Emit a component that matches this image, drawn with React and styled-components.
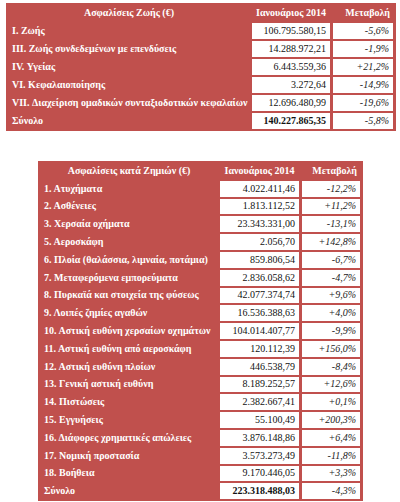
import styled, { createGlobalStyle } from "styled-components";

const GlobalStyle = createGlobalStyle`
  html, body {
    margin: 0;
    padding: 0;
    background: #ffffff;
  }
`;

const Page = styled.div`
  display: flex;
  flex-direction: column;
  align-items: flex-start;
  padding: 3px 0 0 6px;
  font-family: "Liberation Serif", "Times New Roman", serif;
`;

const Table = styled.table`
  table-layout: fixed;
  width: ${(p) => p.$width}px;
  margin: ${(p) => p.$margin || "0"};
  border-collapse: separate;
  border-spacing: 3px 2px;
  background: #c0504d;
  font-size: 10px;
  line-height: 1;
`;

const Row = styled.tr`
  height: ${(p) => p.$h}px;
`;

const HeadCell = styled.th`
  color: #ffffff;
  font-weight: bold;
  text-align: ${(p) => p.$align || "center"};
  padding: 0 3px;
  white-space: nowrap;
`;

const Label = styled.td`
  color: #ffffff;
  font-weight: bold;
  padding: 0 3px;
  white-space: nowrap;
  overflow: hidden;
`;

const Amount = styled.td`
  background: #ffffff;
  color: #111111;
  text-align: right;
  padding: 0 4px;
  white-space: nowrap;
  font-weight: ${(p) => (p.$bold ? "bold" : "normal")};
`;

const Change = styled.td`
  background: #ffffff;
  color: #222222;
  text-align: right;
  font-style: italic;
  padding: 0 4px;
  white-space: nowrap;
`;

const life = [
  ["I. Ζωής", "106.795.580,15", "-5,6%"],
  ["III. Ζωής συνδεδεμένων με επενδύσεις", "14.288.972,21", "-1,9%"],
  ["IV. Υγείας", "6.443.559,36", "+21,2%"],
  ["VI. Κεφαλαιοποίησης", "3.272,64", "-14,9%"],
  ["VII. Διαχείριση ομαδικών συνταξιοδοτικών κεφαλαίων", "12.696.480,99", "-19,6%"],
];

const damage = [
  ["1. Ατυχήματα", "4.022.411,46", "-12,2%"],
  ["2. Ασθένειες", "1.813.112,52", "+11,2%"],
  ["3. Χερσαία οχήματα", "23.343.331,00", "-13,1%"],
  ["5. Αεροσκάφη", "2.056,70", "+142,8%"],
  ["6. Πλοία (θαλάσσια, λιμναία, ποτάμια)", "859.806,54", "-6,7%"],
  ["7. Μεταφερόμενα εμπορεύματα", "2.836.058,62", "-4,7%"],
  ["8. Πυρκαϊά και στοιχεία της φύσεως", "42.077.374,74", "+9,6%"],
  ["9. Λοιπές ζημίες αγαθών", "16.536.388,63", "+4,0%"],
  ["10. Αστική ευθύνη χερσαίων οχημάτων", "104.014.407,77", "-9,9%"],
  ["11. Αστική ευθύνη από αεροσκάφη", "120.112,39", "+156,0%"],
  ["12. Αστική ευθύνη πλοίων", "446.538,79", "-8,4%"],
  ["13. Γενική αστική ευθύνη", "8.189.252,57", "+12,6%"],
  ["14. Πιστώσεις", "2.382.667,41", "+0,1%"],
  ["15. Εγγυήσεις", "55.100,49", "+200,3%"],
  ["16. Διάφορες χρηματικές απώλειες", "3.876.148,86", "+6,4%"],
  ["17. Νομική προστασία", "3.573.273,49", "-11,8%"],
  ["18. Βοήθεια", "9.170.446,05", "+3,3%"],
];

const DataTable = ({ title, rows, total, widths, width, margin, h }) => (
  <Table $width={width} $margin={margin}>
    <colgroup>
      {widths.map((w, i) => (
        <col key={i} style={{ width: w }} />
      ))}
    </colgroup>
    <thead>
      <Row $h={h}>
        <HeadCell>{title}</HeadCell>
        <HeadCell>Ιανουάριος 2014</HeadCell>
        <HeadCell $align="right">Μεταβολή</HeadCell>
      </Row>
    </thead>
    <tbody>
      {rows.map(([name, amount, change]) => (
        <Row $h={h} key={name}>
          <Label>{name}</Label>
          <Amount>{amount}</Amount>
          <Change>{change}</Change>
        </Row>
      ))}
      <Row $h={h}>
        <Label>Σύνολο</Label>
        <Amount $bold>{total[0]}</Amount>
        <Change>{total[1]}</Change>
      </Row>
    </tbody>
  </Table>
);

export default function App() {
  return (
    <Page>
      <GlobalStyle />
      <DataTable
        title="Ασφαλίσεις Ζωής (€)"
        rows={life}
        total={["140.227.865,35", "-5,8%"]}
        widths={[240, 78, 60]}
        width={390}
        h={16}
      />
      <DataTable
        title="Ασφαλίσεις κατά Ζημιών (€)"
        rows={damage}
        total={["223.318.488,03", "-4,3%"]}
        widths={[176, 79, 58]}
        width={325}
        margin="30px 0 0 32px"
        h={15.8}
      />
    </Page>
  );
}
